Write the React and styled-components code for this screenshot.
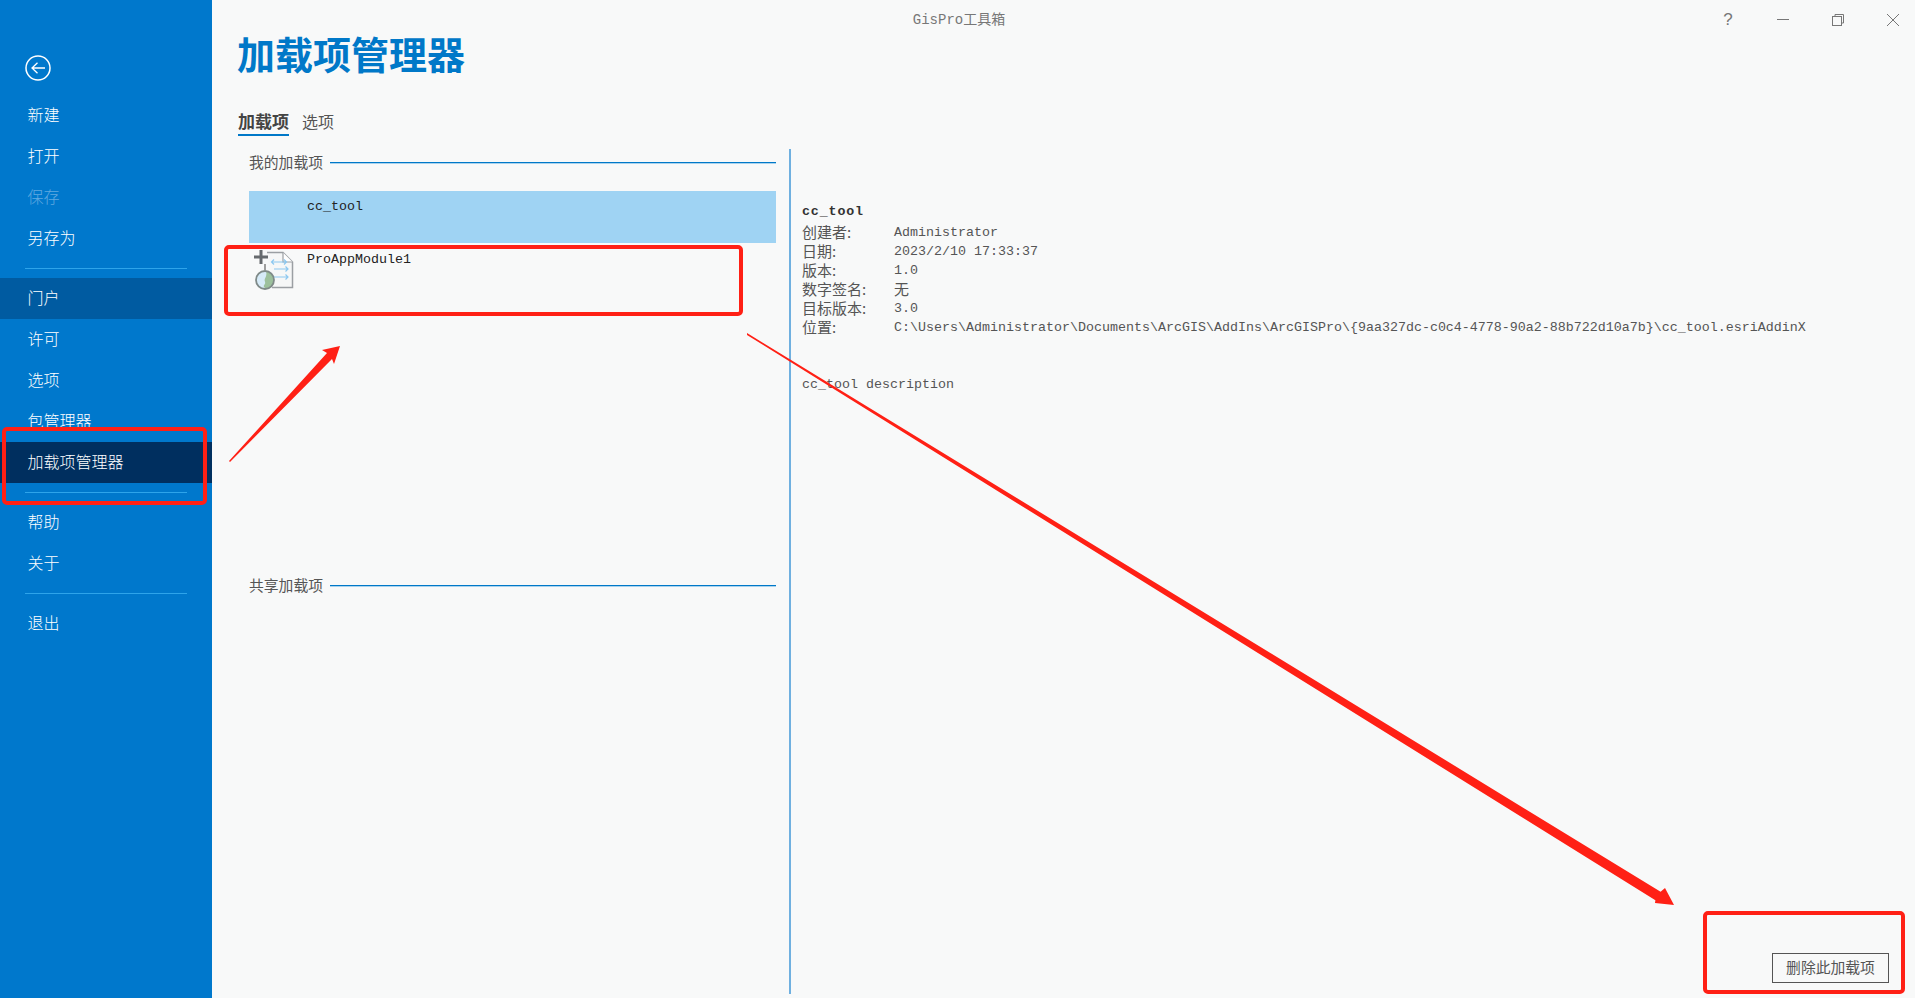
import React from "react";
import styled, { createGlobalStyle } from "styled-components";

const Global = createGlobalStyle`
  html, body { margin: 0; padding: 0; height: 100%; overflow: hidden; background: #f8f9f9; }
  #root { height: 100%; }
  * { box-sizing: border-box; }
`;

const cjk = `"Noto Sans CJK SC", "Liberation Sans", sans-serif`;
const mono = `"Liberation Mono", "Noto Sans CJK SC", monospace`;

const Page = styled.div`
  position: relative;
  display: flex;
  width: 1915px;
  height: 998px;
  overflow: hidden;
  background: #f8f9f9;
  font-family: ${cjk};
`;

const Sidebar = styled.nav`
  flex: none;
  width: 212px;
  height: 100%;
  padding-top: 55px;
  background: #0078cc;
  color: #fff;
`;

const BackButton = styled.div`
  display: block;
  width: 26px;
  height: 26px;
  margin: 0 0 14px 25px;
`;

const NavItem = styled.div`
  display: flex;
  align-items: center;
  height: 41px;
  padding: 0 0 4px 27.500px;
  font-size: 16px;
  font-weight: 300;
  color: ${(p) => (p.$disabled ? "#62a9e0" : "#fff")};
  background: ${(p) => (p.$active ? "#002f5f" : p.$hover ? "#005ba1" : "transparent")};
`;

const NavSeparator = styled.div`
  height: 1px;
  margin: 9px 25px 9px 25px;
  background: #2ea4ea;
`;

const Main = styled.main`
  flex: 1;
  min-width: 0;
  display: flex;
  flex-direction: column;
  height: 100%;
`;

const TitleBar = styled.header`
  flex: none;
  display: flex;
  justify-content: space-between;
  align-items: flex-start;
  height: 28px;
  padding-right: 11px;
`;

const WindowTitle = styled.div`
  width: 1494px;
  padding-top: 12px;
  text-align: center;
  font: 14px/16px ${mono};
  color: #777;
`;

const WindowControls = styled.div`
  display: flex;
  gap: 33px;
  padding-top: 9px;
`;

const ControlButton = styled.div`
  display: flex;
  align-items: center;
  justify-content: center;
  width: 22px;
  height: 22px;
  color: #777;
  font: 17px/22px "Liberation Sans", sans-serif;
`;

const PageTitle = styled.h1`
  flex: none;
  margin: 0;
  padding-left: 25px;
  font-size: 38px;
  line-height: 50px;
  font-weight: 700;
  color: #0078c8;
`;

const Tabs = styled.div`
  flex: none;
  display: flex;
  gap: 13px;
  height: 28px;
  margin: 30px 0 13px 26px;
`;

const Tab = styled.div`
  height: 28px;
  font-size: ${(p) => (p.$active ? "17px" : "16px")};
  line-height: 26px;
  font-weight: ${(p) => (p.$active ? 700 : 400)};
  color: ${(p) => (p.$active ? "#444" : "#555")};
  border-bottom: ${(p) => (p.$active ? "2px solid #0078c8" : "none")};
`;

const Body = styled.div`
  flex: 1;
  min-height: 0;
  display: flex;
  margin-bottom: 4px;
  padding-left: 26px;
`;

const AddinColumn = styled.section`
  flex: none;
  width: 538px;
  padding-left: 11px;
`;

const SectionHead = styled.div`
  display: flex;
  align-items: center;
  gap: 7px;
  height: 28px;
  padding: 0 0 3px 0;
  font-size: 14.800px;
  color: #555;
  white-space: nowrap;
`;

const HeadRule = styled.div`
  flex: 1;
  height: 1px;
  margin-top: 2px;
  background: #0078c8;
  box-shadow: 0 1px 0 #a9d3ee;
`;

const AddinList = styled.div`
  height: 381px;
  margin-top: 14px;
`;

const AddinRow = styled.div`
  display: flex;
  gap: 13px;
  height: 52px;
  padding: ${(p) => (p.$selected ? "7px" : "8px")} 0 0 5px;
  background: ${(p) => (p.$selected ? "#9fd3f3" : "transparent")};
`;

const IconSlot = styled.div`
  flex: none;
  width: 40px;
  height: 40px;
  margin-top: -1px;
`;

const AddinName = styled.div`
  font: 13.340px/18px ${mono};
  color: #222;
`;

const Divider = styled.div`
  flex: none;
  width: 2px;
  margin-left: 13px;
  background: #6fb0e0;
`;

const Details = styled.section`
  flex: 1;
  min-width: 0;
  display: flex;
  flex-direction: column;
  padding: 53px 26px 11px 11px;
`;

const DetailTitle = styled.div`
  height: 21px;
  font: 700 13.340px/20px ${mono};
  letter-spacing: 0.85px;
  color: #333;
`;

const DetailGrid = styled.div`
  display: grid;
  grid-template-columns: 92px 1fr;
  grid-auto-rows: 19px;
`;

const DetailLabel = styled.div`
  font-size: 15px;
  line-height: 17px;
  color: #555;
  white-space: nowrap;
`;

const DetailValue = styled.div`
  font: 13.340px/19px ${mono};
  color: #555;
  white-space: nowrap;
`;

const ValueCjk = styled.span`
  font-family: ${cjk};
  font-size: 15px;
  line-height: 17px;
`;

const Description = styled.div`
  margin-top: 38px;
  font: 13.340px/19px ${mono};
  color: #555;
`;

const RemoveButton = styled.button`
  align-self: flex-end;
  width: 117px;
  height: 30px;
  margin-top: auto;
  padding: 0 0 4px;
  background: #f8f9f9;
  border: 1px solid #555;
  border-radius: 0;
  font-family: ${cjk};
  font-size: 14.800px;
  color: #555;
`;

const Annotations = styled.svg`
  position: absolute;
  left: 0;
  top: 0;
  pointer-events: none;
`;

const BackIcon = () => (
  <svg width="26" height="26" viewBox="0 0 26 26" fill="none" stroke="#fff">
    <circle cx="13" cy="13" r="12" strokeWidth="1.5" />
    <path d="M20 13H7M12.500 7.800 7 13l5.500 5.200" strokeWidth="1.3" />
  </svg>
);

const AddinIcon = () => (
  <svg width="40" height="40" viewBox="0 0 40 40" fill="none">
    <path d="M13 2.500h16l9.500 9.500v25.500H18" fill="#f6f7f7" stroke="#9b9fa3" strokeWidth="1.5" />
    <path d="M29 2.500V12h9.500" stroke="#9b9fa3" strokeWidth="1.2" fill="#fff" />
    <g stroke="#8cc8f0" strokeWidth="1.2">
      <path d="M18 12h14M20 9.500 17.500 12l2.500 2.500M30 9.500l2.500 2.500-2.500 2.500" />
      <path d="M20 19h14M31.500 16.500 34 19l-2.500 2.500" />
      <path d="M20 27h14M31.500 24.500 34 27l-2.500 2.500" />
    </g>
    <path d="M7 0v14M0 7h14" stroke="#666a6e" strokeWidth="3" />
    <path d="M11 14v6" stroke="#777" strokeWidth="1.4" />
    <circle cx="11" cy="30" r="9" fill="#d6ebf8" />
    <path d="M12 21.200c4.500.3 8 4 8 8.800 0 4.600-3.500 8.300-8 8.800-2-1.300-3.200-2.700-1.500-4.300 2-1.800-.8-3.500.5-6 1-1.800 2-4.300 1-7.300z" fill="#9cc09c" />
    <circle cx="11" cy="30" r="9" stroke="#7f8a88" strokeWidth="1.800" />
  </svg>
);

const nav1 = [["新建"], ["打开"], ["保存", { $disabled: true }], ["另存为"]];
const nav2 = [["门户", { $hover: true }], ["许可"], ["选项"], ["包管理器"], ["加载项管理器", { $active: true }]];
const nav3 = [["帮助"], ["关于"]];
const renderNav = (items) => items.map(([t, p]) => <NavItem key={t} {...p}>{t}</NavItem>);

const details = [
  ["创建者:", "Administrator"],
  ["日期:", "2023/2/10 17:33:37"],
  ["版本:", "1.0"],
  ["数字签名:", <ValueCjk key="v">无</ValueCjk>],
  ["目标版本:", "3.0"],
  ["位置:", "C:\\Users\\Administrator\\Documents\\ArcGIS\\AddIns\\ArcGISPro\\{9aa327dc-c0c4-4778-90a2-88b722d10a7b}\\cc_tool.esriAddinX"],
];

export default function App() {
  return (
    <Page>
      <Global />
      <Sidebar>
        <BackButton><BackIcon /></BackButton>
        {renderNav(nav1)}
        <NavSeparator />
        {renderNav(nav2)}
        <NavSeparator />
        {renderNav(nav3)}
        <NavSeparator />
        <NavItem>退出</NavItem>
      </Sidebar>
      <Main>
        <TitleBar>
          <WindowTitle>GisPro工具箱</WindowTitle>
          <WindowControls>
            <ControlButton>?</ControlButton>
            <ControlButton>
              <svg width="14" height="14" viewBox="0 0 14 14" stroke="#777" fill="none"><path d="M1 6.500h12" /></svg>
            </ControlButton>
            <ControlButton>
              <svg width="14" height="14" viewBox="0 0 14 14" stroke="#777" fill="none"><rect x="1.500" y="3.500" width="9" height="9" /><path d="M4 3.500V1.500h8.500v8.500h-2" /></svg>
            </ControlButton>
            <ControlButton>
              <svg width="16" height="16" viewBox="0 0 16 16" stroke="#777" fill="none"><path d="M2 2l12 12M14 2 2 14" /></svg>
            </ControlButton>
          </WindowControls>
        </TitleBar>
        <PageTitle>加载项管理器</PageTitle>
        <Tabs>
          <Tab $active>加载项</Tab>
          <Tab>选项</Tab>
        </Tabs>
        <Body>
          <AddinColumn>
            <SectionHead>我的加载项<HeadRule /></SectionHead>
            <AddinList>
              <AddinRow $selected>
                <IconSlot />
                <AddinName>cc_tool</AddinName>
              </AddinRow>
              <AddinRow>
                <IconSlot><AddinIcon /></IconSlot>
                <AddinName>ProAppModule1</AddinName>
              </AddinRow>
            </AddinList>
            <SectionHead>共享加载项<HeadRule /></SectionHead>
          </AddinColumn>
          <Divider />
          <Details>
            <DetailTitle>cc_tool</DetailTitle>
            <DetailGrid>
              {details.map(([k, v]) => (
                <React.Fragment key={k}>
                  <DetailLabel>{k}</DetailLabel>
                  <DetailValue>{v}</DetailValue>
                </React.Fragment>
              ))}
            </DetailGrid>
            <Description>cc_tool description</Description>
            <RemoveButton>删除此加载项</RemoveButton>
          </Details>
        </Body>
      </Main>
      <Annotations width="1915" height="998" viewBox="0 0 1915 998">
        <g fill="none" stroke="#ff2015" strokeWidth="4">
          <rect x="226" y="247" width="515" height="67" rx="3" />
          <rect x="4" y="429" width="201" height="74" rx="3" />
          <rect x="1705" y="913" width="198" height="79" rx="3" />
        </g>
        <g fill="#ff2015">
          <polygon points="229,461 327,353 322,350 340,346 334,364 332,359 230,462" />
          <polygon points="747,333 1660.600,891.700 1665,888 1674,905 1655,903 1655.400,900.300 747,335" />
        </g>
      </Annotations>
    </Page>
  );
}
